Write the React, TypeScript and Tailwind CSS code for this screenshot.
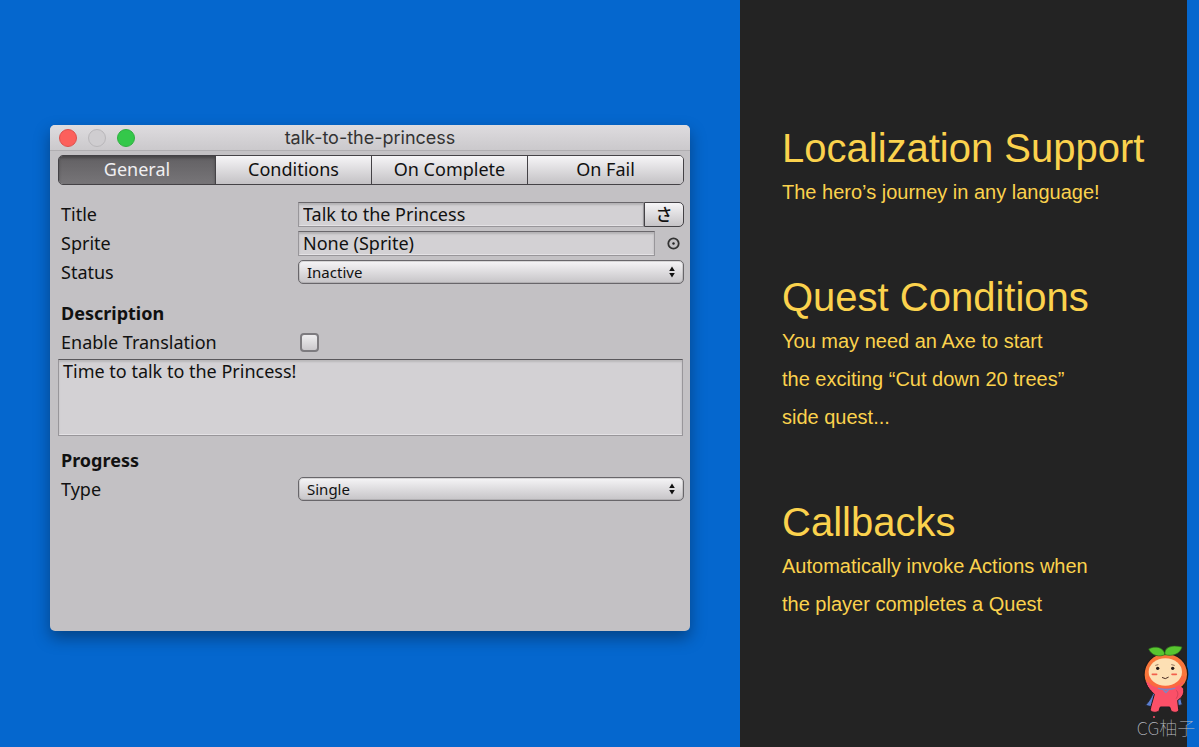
import React, { useState } from 'react';

const TABS = ['General', 'Conditions', 'On Complete', 'On Fail'];

const FEATURES = [
  { title: 'Localization Support', lines: ['The hero’s journey in any language!'] },
  {
    title: 'Quest Conditions',
    lines: ['You may need an Axe to start', 'the exciting “Cut down 20 trees”', 'side quest...'],
  },
  { title: 'Callbacks', lines: ['Automatically invoke Actions when', 'the player completes a Quest'] },
];

const FIELD =
  'h-[25px] min-w-0 flex-1 border border-[#98969a] border-t-[#6a686c] bg-[#d3d1d4] px-1 pb-0.5 outline-none shadow-[inset_0_2px_2px_rgba(0,0,0,0.15),inset_0_-1px_0_#e4e2e5]';

interface RowProps {
  label: string;
  htmlFor: string;
  children: React.ReactNode;
}

function Row({ label, htmlFor, children }: RowProps) {
  return (
    <div className="flex h-[25px] items-center">
      <label htmlFor={htmlFor} className="w-[240px] shrink-0 pb-0.5 pl-[3px]">
        {label}
      </label>
      {children}
    </div>
  );
}

interface PopupProps {
  id: string;
  options: string[];
}

function Popup({ id, options }: PopupProps) {
  return (
    <div className="relative h-[25px] flex-1">
      <select
        id={id}
        className="block h-6 w-full appearance-none rounded-[5px] border border-[#68666a] bg-linear-to-b from-[#f6f5f7] to-[#c6c4c7] px-2 text-[15px] leading-[22px] outline-none shadow-[inset_0_0_0_1px_rgba(90,88,92,0.2)]"
      >
        {options.map((option) => (
          <option key={option}>{option}</option>
        ))}
      </select>
      <svg viewBox="0 0 6 12" className="pointer-events-none absolute right-[9px] top-1.5 h-3 w-1.5" fill="#111">
        <path d="M3 0.5 L5.8 5 H0.2 Z M3 11.5 L5.8 7 H0.2 Z" />
      </svg>
    </div>
  );
}

function QuestWindow() {
  const [tab, setTab] = useState(TABS[0]);

  return (
    <section className="min-h-[506px] rounded-[5px] bg-[#c3c1c4] font-['Noto_Sans','Noto_Sans_CJK_JP',sans-serif] text-lg leading-6 text-[#111] shadow-[0_7px_16px_rgba(0,0,0,0.35)]">
      <header className="grid h-[26px] grid-cols-[1fr_auto_1fr] items-center rounded-t-[5px] border-b border-[#b0aeb1] bg-linear-to-b from-[#dedcdf] to-[#cbc9cc] px-[9px]">
        <div className="flex gap-[11px]">
          <button aria-label="Close" className="size-[18px] rounded-full border border-[#dd504c] bg-[#fc605c]" />
          <button aria-label="Minimize" className="size-[18px] rounded-full border border-[#b9b7ba] bg-[#cfcdd0]" />
          <button aria-label="Zoom" className="size-[18px] rounded-full border border-[#2fb040] bg-[#34c84a]" />
        </div>
        <h1 className="font-[Inter,sans-serif] text-lg leading-6 text-[#333]">talk-to-the-princess</h1>
      </header>

      <div className="flex flex-col gap-1 pt-1 pr-1.5 pb-4 pl-2">
        <nav className="mb-[13px] grid h-[30px] grid-cols-4 overflow-hidden rounded-[5px] border border-[#444246]">
          {TABS.map((name) => (
            <button
              key={name}
              onClick={() => setTab(name)}
              className={
                name === tab
                  ? 'bg-linear-to-b from-[#626063] to-[#777578] pb-0.5 text-[#f0eff1] shadow-[inset_0_2px_3px_rgba(0,0,0,0.3)]'
                  : 'border-l border-[#444246] bg-linear-to-b from-[#f6f5f7] to-[#c4c2c5] pb-0.5'
              }
            >
              {name}
            </button>
          ))}
        </nav>

        <Row label="Title" htmlFor="title">
          <input id="title" defaultValue="Talk to the Princess" className={FIELD} />
          <button
            aria-label="Translate title"
            className="h-[25px] w-10 rounded-r-[5px] border border-[#444246] bg-linear-to-b from-[#f6f5f7] to-[#c6c4c7] text-[17px] leading-5 font-medium"
          >
            さ
          </button>
        </Row>
        <Row label="Sprite" htmlFor="sprite">
          <input id="sprite" defaultValue="None (Sprite)" className={FIELD} />
          <button aria-label="Select sprite" className="flex w-[29px] justify-end pr-1">
            <svg viewBox="0 0 13 13" className="size-[13px]" fill="none" stroke="#333">
              <circle cx="6.5" cy="6.5" r="5.2" strokeWidth="1.8" />
              <circle cx="6.5" cy="6.5" r="1.2" fill="#222" stroke="none" />
            </svg>
          </button>
        </Row>
        <Row label="Status" htmlFor="status">
          <Popup id="status" options={['Inactive', 'Active', 'Complete']} />
        </Row>

        <h2 className="mt-3 h-[25px] pl-[3px] font-bold">Description</h2>
        <Row label="Enable Translation" htmlFor="translate">
          <input
            id="translate"
            type="checkbox"
            className="ml-0.5 size-[19px] appearance-none rounded-[4px] border-2 border-[#7d7b7f] bg-linear-to-b from-[#efeef0] to-[#cbc9cc] checked:bg-[#555]"
          />
        </Row>
        <textarea
          aria-label="Description"
          defaultValue="Time to talk to the Princess!"
          className="mr-px block h-[77px] resize-none border border-[#98969a] border-t-[#5a585c] bg-[#d3d1d4] px-1 leading-[22px] outline-none shadow-[inset_0_2px_2px_rgba(0,0,0,0.12),inset_0_-1px_0_#e4e2e5]"
        />

        <h2 className="mt-2 h-[25px] pl-[3px] font-bold">Progress</h2>
        <Row label="Type" htmlFor="type">
          <Popup id="type" options={['Single', 'Multiple']} />
        </Row>
      </div>
    </section>
  );
}

function Mascot() {
  return (
    <div className="absolute right-1 bottom-[7px] flex w-[58px] flex-col items-center">
      <svg viewBox="0 0 138 207" className="h-[69px] w-[46px]" strokeLinejoin="round" strokeLinecap="round">
        {/* cape */}
        <path d="M34 132 C28 155 18 170 7 181 C34 189 82 189 118 179 L106 134 Z" fill="#5b7fd0" stroke="#20242e" strokeWidth="3" />
        {/* hood */}
        <path
          d="M67 25 C28 25 3 54 3 90 C3 108 10 122 28 133 H108 C126 122 134 108 134 88 C134 52 106 25 67 25 Z"
          fill="#f9763a"
          stroke="#1b1b1b"
          strokeWidth="4"
        />
        {/* body */}
        <path
          d="M8 108 C14 132 28 140 34 148 C29 168 23 184 22 194 C23 204 44 204 48 197 L52 186 H80 L84 197 C89 204 107 204 107 194 L104 166 C114 160 125 148 122 134 C119 127 114 126 110 124 L124 112 H14 Z"
          fill="#fb5068"
        />
        <path
          d="M8 112 C14 132 28 140 34 148 C29 168 23 184 22 194 C23 204 44 204 48 197 L52 186 H80 L84 197 C89 204 107 204 107 194 L104 166 C114 160 125 148 122 134"
          fill="none"
          stroke="#1b1b1b"
          strokeWidth="3"
        />
        <path d="M101 137 C107 144 105 152 100 160" fill="none" stroke="#b8384e" strokeWidth="2" />
        <path d="M10 104 C24 126 45 130 68 130 C92 130 113 122 128 102 L124 94 L14 94 Z" fill="#fb693f" />
        <ellipse cx="67" cy="81" rx="50" ry="41" fill="#fde0b4" />
        <circle cx="44" cy="70" r="5" fill="#241a18" />
        <circle cx="89" cy="70" r="5" fill="#241a18" />
        <path d="M38 61 L45 59 M86 59 L94 61" stroke="#5b3a2c" strokeWidth="2" />
        <path d="M58 98 Q67 105 76 97" fill="none" stroke="#4a2c22" strokeWidth="3" />
        <path d="M28 88 H41 M87 88 H100" stroke="#f2604d" strokeWidth="5" />
        <path d="M46 130 Q69 137 95 130 M61 135 L69 143 L76 135" fill="none" stroke="#7c88c4" strokeWidth="4" />
        {/* leaves */}
        <path d="M66 29 C50 37 26 33 17 12 C34 2 62 4 66 29 Z" fill="#58c52f" stroke="#2c6a1c" strokeWidth="2" />
        <path d="M66 29 C62 8 84 -2 117 6 C112 26 88 36 66 29 Z" fill="#58c52f" stroke="#2c6a1c" strokeWidth="2" />
      </svg>
      <span className="font-['Liberation_Sans_Narrow','Noto_Sans_CJK_SC',sans-serif] text-lg leading-[26px] font-thin whitespace-nowrap text-[#b9bcc2]">
        CG柚子
      </span>
      <i className="absolute left-4 bottom-[22px] size-0.5 rounded-full bg-[#fb5068]" />
    </div>
  );
}

export default function App() {
  return (
    <div className="relative flex min-h-screen bg-[#0567ce]">
      <main className="min-w-0 flex-1 px-[50px] pt-[125px] pb-10">
        <QuestWindow />
      </main>
      <aside className="mr-3 flex w-[447px] shrink-0 flex-col gap-[61px] bg-[#232323] pt-[123px] pl-[42px] font-['Liberation_Sans',sans-serif] text-[#fbd24d]">
        {FEATURES.map(({ title, lines }) => (
          <section key={title}>
            <h2 className="text-[40px] leading-[50px]">{title}</h2>
            {lines.map((line) => (
              <p key={line} className="text-xl leading-[38px]">
                {line}
              </p>
            ))}
          </section>
        ))}
      </aside>
      <Mascot />
    </div>
  );
}
